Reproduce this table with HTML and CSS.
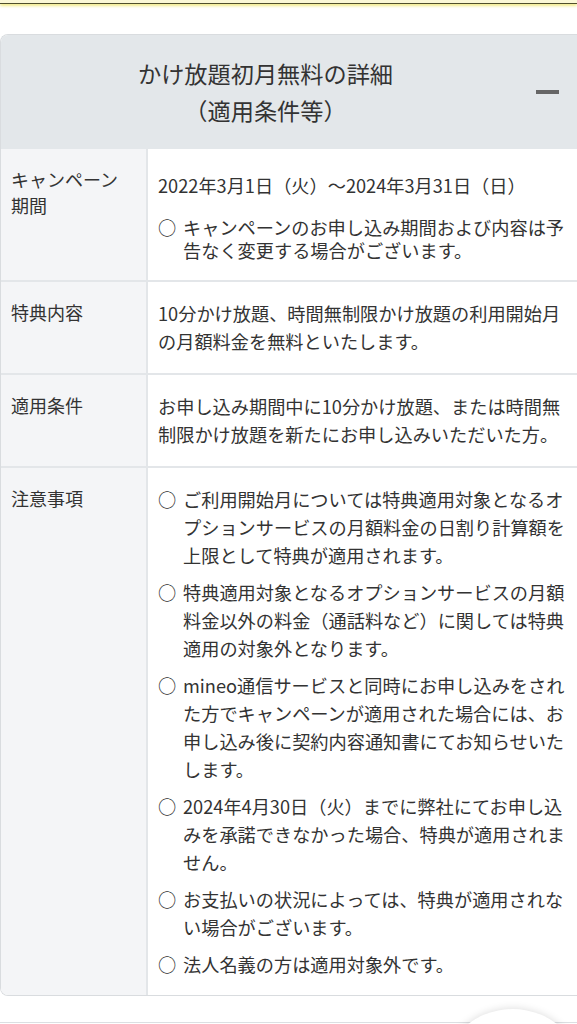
FILE: index.html
```html
<!DOCTYPE html>
<html lang="ja">
<head>
<meta charset="utf-8">
<title>かけ放題初月無料の詳細</title>
<link rel="stylesheet" href="styles.css">
</head>
<body>
<div class="topbar"></div>
<section class="card">
  <div class="card-head">
    <h2 class="title">かけ放題初月無料の詳細<br>（適用条件等）</h2>
    <span class="minus" aria-label="閉じる"></span>
  </div>
  <div class="row">
    <div class="label">キャンペーン<br>期間</div>
    <div class="body">
      <p class="date">2022年3月1日（火）～2024年3月31日（日）</p>
      <ul class="note">
        <li><span class="mark">○</span><span>キャンペーンのお申し込み期間および内容は予告なく変更する場合がございます。</span></li>
      </ul>
    </div>
  </div>
  <div class="row">
    <div class="label">特典内容</div>
    <div class="body"><p>10分かけ放題、時間無制限かけ放題の利用開始月の月額料金を無料といたします。</p></div>
  </div>
  <div class="row">
    <div class="label">適用条件</div>
    <div class="body"><p>お申し込み期間中に10分かけ放題、または時間無制限かけ放題を新たにお申し込みいただいた方。</p></div>
  </div>
  <div class="row">
    <div class="label">注意事項</div>
    <div class="body">
      <ul class="list">
        <li><span class="mark">○</span><span>ご利用開始月については特典適用対象となるオプションサービスの月額料金の日割り計算額を上限として特典が適用されます。</span></li>
        <li><span class="mark">○</span><span>特典適用対象となるオプションサービスの月額料金以外の料金（通話料など）に関しては特典適用の対象外となります。</span></li>
        <li><span class="mark">○</span><span>mineo通信サービスと同時にお申し込みをされた方でキャンペーンが適用された場合には、お申し込み後に契約内容通知書にてお知らせいたします。</span></li>
        <li><span class="mark">○</span><span>2024年4月30日（火）までに弊社にてお申し込みを承諾できなかった場合、特典が適用されません。</span></li>
        <li><span class="mark">○</span><span>お支払いの状況によっては、特典が適用されない場合がございます。</span></li>
        <li><span class="mark">○</span><span>法人名義の方は適用対象外です。</span></li>
      </ul>
    </div>
  </div>
</section>
<div class="next-card"></div>
<div class="fab"></div>
</body>
</html>
```
FILE: styles.css
```css
html, body {
  margin: 0;
  padding: 0;
  background: #ffffff;
}
html {
  height: 1024px;
  overflow: hidden;
}
body {
  font-family: "Noto Sans CJK JP", "Noto Sans", sans-serif;
  color: #333333;
  overflow: hidden;
  position: relative;
  height: 1024px;
}
.topbar {
  height: 3px;
  background: #fbf8d6;
  border-bottom: 1px solid #4f4f2c;
  box-shadow: 0 2px 3px rgba(238, 228, 90, 0.7);
}
.card {
  margin-top: 30px;
  border: 1px solid #d9dcdf;
  border-right: none;
  border-radius: 8px 0 0 8px;
  overflow: hidden;
}
.card-head {
  background: #e3e7ea;
  display: grid;
  grid-template-columns: 1fr auto;
  align-items: center;
  padding: 20px 18px 20px 0;
}
.title {
  margin: 0;
  text-align: center;
  font-size: 23.2px;
  font-weight: 400;
  line-height: 37px;
  color: #333333;
}
.minus {
  display: block;
  width: 23px;
  height: 3.5px;
  background: #666666;
  margin-left: 6px;
}
.row {
  display: grid;
  grid-template-columns: 147px 1fr;
}
.row + .row {
  border-top: 2px solid #e3e6e9;
}
.label {
  background: #f4f5f7;
  border-right: 2px solid #e3e6e9;
  padding: 17px 8px 17px 10px;
  font-size: 18px;
  line-height: 26px;
}
.body {
  padding: 17px 6px 17px 10px;
  font-size: 18.2px;
  line-height: 28.5px;
}
.body p {
  margin: 0;
}
.body .date {
  margin-top: 5px;
}
ul {
  list-style: none;
  margin: 0;
  padding: 0;
}
li {
  display: flex;
}
.mark {
  flex: 0 0 25px;
}
.note {
  margin-top: 16px;
  line-height: 23.5px;
}
.row:first-of-type .body {
  padding-bottom: 18px;
}
.list {
  line-height: 28px;
}
.list li + li {
  margin-top: 9px;
}
.next-card {
  margin-top: 26px;
  border-top: 1px solid #dcdfe2;
  height: 2px;
}
.fab {
  position: absolute;
  left: 439px;
  top: 1009px;
  width: 147px;
  height: 147px;
  border-radius: 50%;
  background: #ffffff;
  box-shadow: 0 0 8px rgba(0, 0, 0, 0.15);
}
```
